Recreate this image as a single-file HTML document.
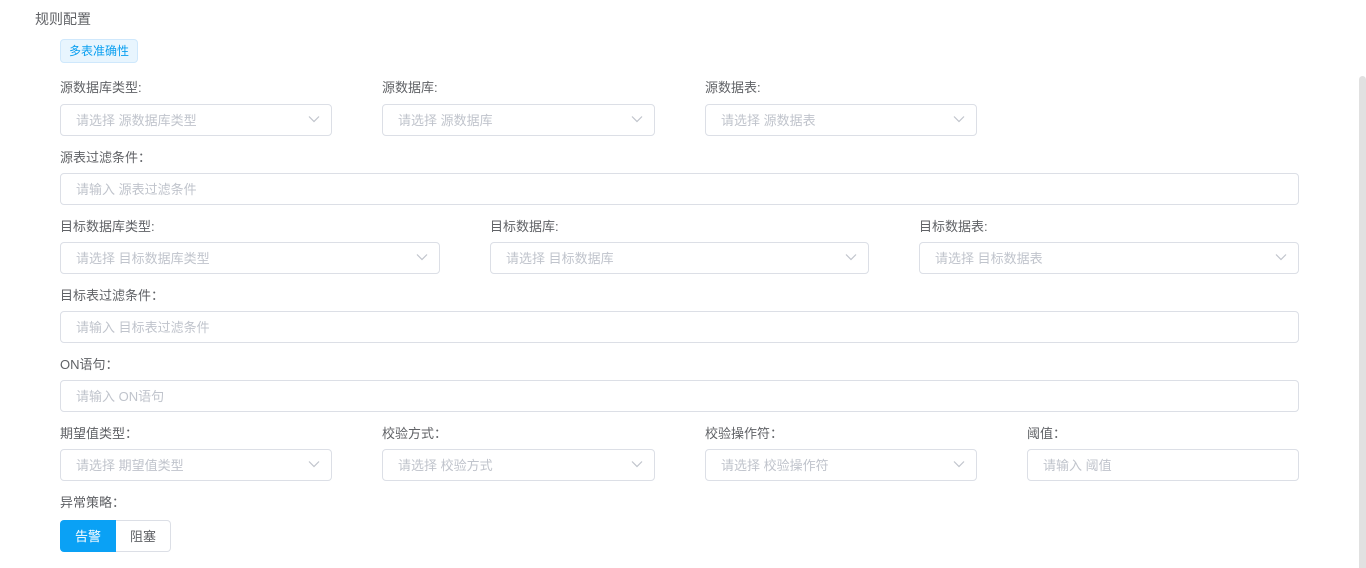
<!DOCTYPE html>
<html><head><meta charset="utf-8"><style>
*{box-sizing:border-box;margin:0;padding:0}
body{width:1366px;height:568px;background:#fff;font-family:"Liberation Sans","Noto Sans CJK SC",sans-serif;font-size:13px;color:#606266;position:relative;overflow:hidden}
.a{position:absolute}
.lbl{position:absolute;line-height:16px;font-size:13px;color:#606266;margin-top:1px}
.in{position:absolute;height:32px;border:1px solid #dcdfe6;border-radius:4px;color:#c0c4cc;padding-left:15px;line-height:32px;font-size:13px}
.in svg{position:absolute;right:11px;top:10px}
</style></head><body>
<div class="a" style="left:35px;top:10px;font-size:14px;color:#606266;line-height:18px">规则配置</div>
<div class="a" style="left:60px;top:39px;width:78px;height:24px;background:#e8f5fe;border:1px solid #cfe8fc;border-radius:4px;color:#0a9ff0;font-size:12px;line-height:22px;text-align:center">多表准确性</div>

<div class="lbl" style="left:60px;top:79px">源数据库类型:</div>
<div class="lbl" style="left:382px;top:79px">源数据库:</div>
<div class="lbl" style="left:705px;top:79px">源数据表:</div>
<div class="in" style="left:60px;top:104px;width:272px">请选择 源数据库类型<svg width="12" height="8" viewBox="0 0 12 8"><path d="M1 1.5l5 5 5-5" fill="none" stroke="#c0c4cc" stroke-width="1.2"/></svg></div>
<div class="in" style="left:382px;top:104px;width:273px">请选择 源数据库<svg width="12" height="8" viewBox="0 0 12 8"><path d="M1 1.5l5 5 5-5" fill="none" stroke="#c0c4cc" stroke-width="1.2"/></svg></div>
<div class="in" style="left:705px;top:104px;width:272px">请选择 源数据表<svg width="12" height="8" viewBox="0 0 12 8"><path d="M1 1.5l5 5 5-5" fill="none" stroke="#c0c4cc" stroke-width="1.2"/></svg></div>

<div class="lbl" style="left:60px;top:149px">源表过滤条件：</div>
<div class="in" style="left:60px;top:173px;width:1239px">请输入 源表过滤条件</div>

<div class="lbl" style="left:60px;top:218px">目标数据库类型:</div>
<div class="lbl" style="left:490px;top:218px">目标数据库:</div>
<div class="lbl" style="left:919px;top:218px">目标数据表:</div>
<div class="in" style="left:60px;top:242px;width:380px">请选择 目标数据库类型<svg width="12" height="8" viewBox="0 0 12 8"><path d="M1 1.5l5 5 5-5" fill="none" stroke="#c0c4cc" stroke-width="1.2"/></svg></div>
<div class="in" style="left:490px;top:242px;width:379px">请选择 目标数据库<svg width="12" height="8" viewBox="0 0 12 8"><path d="M1 1.5l5 5 5-5" fill="none" stroke="#c0c4cc" stroke-width="1.2"/></svg></div>
<div class="in" style="left:919px;top:242px;width:380px">请选择 目标数据表<svg width="12" height="8" viewBox="0 0 12 8"><path d="M1 1.5l5 5 5-5" fill="none" stroke="#c0c4cc" stroke-width="1.2"/></svg></div>

<div class="lbl" style="left:60px;top:287px">目标表过滤条件：</div>
<div class="in" style="left:60px;top:311px;width:1239px">请输入 目标表过滤条件</div>

<div class="lbl" style="left:60px;top:356px">ON语句：</div>
<div class="in" style="left:60px;top:380px;width:1239px">请输入 ON语句</div>

<div class="lbl" style="left:60px;top:425px">期望值类型：</div>
<div class="lbl" style="left:382px;top:425px">校验方式：</div>
<div class="lbl" style="left:705px;top:425px">校验操作符：</div>
<div class="lbl" style="left:1027px;top:425px">阈值：</div>
<div class="in" style="left:60px;top:449px;width:272px">请选择 期望值类型<svg width="12" height="8" viewBox="0 0 12 8"><path d="M1 1.5l5 5 5-5" fill="none" stroke="#c0c4cc" stroke-width="1.2"/></svg></div>
<div class="in" style="left:382px;top:449px;width:273px">请选择 校验方式<svg width="12" height="8" viewBox="0 0 12 8"><path d="M1 1.5l5 5 5-5" fill="none" stroke="#c0c4cc" stroke-width="1.2"/></svg></div>
<div class="in" style="left:705px;top:449px;width:272px">请选择 校验操作符<svg width="12" height="8" viewBox="0 0 12 8"><path d="M1 1.5l5 5 5-5" fill="none" stroke="#c0c4cc" stroke-width="1.2"/></svg></div>
<div class="in" style="left:1027px;top:449px;width:272px">请输入 阈值</div>

<div class="lbl" style="left:60px;top:494px">异常策略：</div>
<div class="a" style="left:60px;top:520px;width:56px;height:32px;background:#0aa1f5;border-radius:4px 0 0 4px;color:#fff;text-align:center;line-height:34px">告警</div>
<div class="a" style="left:116px;top:520px;width:55px;height:32px;border:1px solid #dcdfe6;border-left:none;border-radius:0 4px 4px 0;color:#606266;text-align:center;line-height:32px">阻塞</div>

<div class="a" style="left:1359px;top:76px;width:7px;height:492px;background:#e1e1e1;border-radius:4px 4px 0 0"></div>
</body></html>
